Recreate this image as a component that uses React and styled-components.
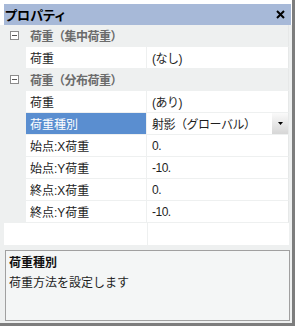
import React from "react";
import styled, { createGlobalStyle } from "styled-components";

const Global = createGlobalStyle`
  html, body { margin: 0; padding: 0; background: #ffffff; }
  body {
    font-family: "Liberation Sans", "Noto Sans CJK JP", sans-serif;
    font-size: 12px;
    color: #1e1e1e;
  }
`;

const GRAY = "#eef0f0";

const Frame = styled.div`
  width: 295px;
  height: 326px;
  box-sizing: border-box;
  background: ${GRAY};
  border-right: 3px solid #7d7d7d;
  border-bottom: 3px solid #7d7d7d;
  display: flex;
  flex-direction: column;
  overflow: hidden;
`;

const HeaderArea = styled.div`
  background: #ffffff;
  padding: 4px 1px 0 4px;
`;

const Header = styled.div`
  height: 21px;
  background: #a7b9d8;
  display: flex;
  align-items: center;
  justify-content: space-between;
  padding: 0 6px 0 1px;
  font-weight: bold;
  font-size: 13px;
  color: #000;
  font-feature-settings: "palt";
`;

const Grid = styled.div`
  width: 289px;
  display: flex;
  flex-direction: column;
`;

const Row = styled.div`
  display: flex;
  height: 21px;
  border-bottom: 1px solid ${GRAY};
  border-right: 1px solid #e6e8e8;
  background: ${(p) => (p.$category ? GRAY : "transparent")};
`;

const Margin = styled.div`
  width: 26px;
  flex: none;
  background: ${GRAY};
  display: flex;
  align-items: center;
  padding-left: 10px;
  box-sizing: border-box;
`;

const CategoryLabel = styled.div`
  display: flex;
  align-items: center;
  padding-left: 4px;
  color: #6b6b6b;
  font-weight: bold;
  letter-spacing: -0.5px;
`;

const NameCell = styled.div`
  width: 121px;
  flex: none;
  display: flex;
  align-items: center;
  padding-left: 4px;
  box-sizing: border-box;
  border-right: 1px solid ${GRAY};
  background: ${(p) => (p.$selected ? "#5a8ed0" : "#ffffff")};
  color: ${(p) => (p.$selected ? "#ffffff" : "#1e1e1e")};
`;

const ValueCell = styled.div`
  flex: 1;
  display: flex;
  align-items: center;
  padding-left: 5px;
  background: #ffffff;
  letter-spacing: -0.5px;
`;

const DropButton = styled.div`
  margin-left: auto;
  width: 16px;
  align-self: stretch;
  background: linear-gradient(#fafafa, #d6d6d6);
  display: flex;
  align-items: center;
  justify-content: center;
`;

const Filler = styled.div`
  height: 22px;
  margin-left: 4px;
  width: 285px;
  display: flex;
  background: #ffffff;
`;

const FillerLeft = styled.div`
  width: 143px;
  border-right: 1px solid ${GRAY};
`;

const Gap = styled.div`
  height: 5px;
`;

const DescBox = styled.div`
  height: 71px;
  box-sizing: border-box;
  margin-left: 5px;
  width: 285px;
  border: 1px solid #a0a0a0;
  background: #f4f6f6;
  padding: 3px 0 0 3px;
`;

const DescTitle = styled.div`
  font-weight: bold;
  line-height: 18px;
  color: #111;
`;

const DescText = styled.div`
  margin-top: 2px;
  line-height: 18px;
  color: #1e1e1e;
`;

const Collapse = () => (
  <svg width="9" height="9" viewBox="0 0 9 9">
    <rect x="0.5" y="0.5" width="8" height="8" fill="#fff" stroke="#8c8c8c" />
    <line x1="2" y1="4.5" x2="7" y2="4.5" stroke="#555" />
  </svg>
);

const Close = () => (
  <svg width="9" height="9" viewBox="0 0 9 9">
    <path d="M1 1 L8 8 M8 1 L1 8" stroke="#000" strokeWidth="2" />
  </svg>
);

const Arrow = () => (
  <svg width="5" height="3" viewBox="0 0 5 3">
    <path d="M0 0 H5 L2.5 3 Z" fill="#000" />
  </svg>
);

const Category = ({ label }) => (
  <Row $category>
    <Margin>
      <Collapse />
    </Margin>
    <CategoryLabel>{label}</CategoryLabel>
  </Row>
);

const Prop = ({ name, value, selected, dropdown }) => (
  <Row>
    <Margin />
    <NameCell $selected={selected}>{name}</NameCell>
    <ValueCell>
      {value}
      {dropdown && (
        <DropButton>
          <Arrow />
        </DropButton>
      )}
    </ValueCell>
  </Row>
);

export default function App() {
  return (
    <>
      <Global />
      <Frame>
        <HeaderArea>
          <Header>
            <span>プロパティ</span>
            <Close />
          </Header>
        </HeaderArea>
        <Grid>
          <Category label="荷重（集中荷重）" />
          <Prop name="荷重" value="(なし)" />
          <Category label="荷重（分布荷重）" />
          <Prop name="荷重" value="(あり)" />
          <Prop name="荷重種別" value="射影（グローバル）" selected dropdown />
          <Prop name="始点:X荷重" value="0." />
          <Prop name="始点:Y荷重" value="-10." />
          <Prop name="終点:X荷重" value="0." />
          <Prop name="終点:Y荷重" value="-10." />
        </Grid>
        <Filler>
          <FillerLeft />
        </Filler>
        <Gap />
        <DescBox>
          <DescTitle>荷重種別</DescTitle>
          <DescText>荷重方法を設定します</DescText>
        </DescBox>
      </Frame>
    </>
  );
}
